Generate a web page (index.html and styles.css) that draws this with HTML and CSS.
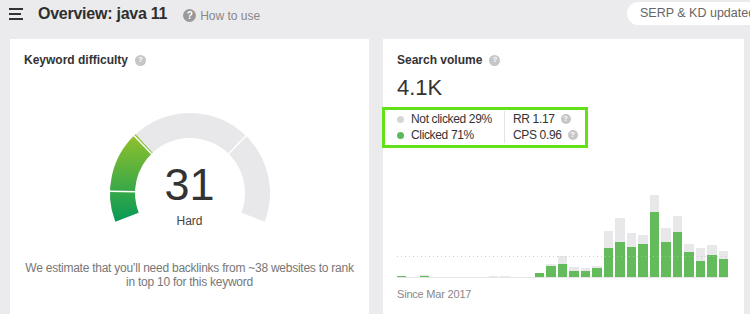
FILE: index.html
```html
<!DOCTYPE html>
<html lang="en">
<head>
<meta charset="utf-8">
<title>Overview: java 11</title>
<link rel="stylesheet" href="styles.css">
</head>
<body>
<header class="topbar">
  <div class="menu"><span></span><span class="short"></span><span></span></div>
  <h1 class="title">Overview: java 11</h1>
  <a class="howto"><span class="qmark dark">?</span>How to use</a>
  <div class="status"><span class="pill">SERP &amp; KD updated</span></div>
</header>
<main class="grid">
  <section class="card kd">
    <h2 class="card-title">Keyword difficulty <span class="qmark">?</span></h2>
    <div class="gauge">
      <svg class="gauge-svg" width="170" height="115" viewBox="0 0 170 115">
        <defs>
          <linearGradient id="kdg" x1="0" y1="25" x2="0" y2="113" gradientUnits="userSpaceOnUse">
            <stop offset="0" stop-color="#95c22b"/>
            <stop offset="1" stop-color="#079a57"/>
          </linearGradient>
        </defs>
        <path d="M21.98 109.19 A67.5 67.5 0 1 1 148.02 109.19" fill="none" stroke="#e8e8ea" stroke-width="25"/>
        <path d="M21.98 109.19 A67.5 67.5 0 0 1 39.09 35.52" fill="none" stroke="url(#kdg)" stroke-width="25"/>
        <line x1="31" y1="83.87" x2="4" y2="83.3" stroke="#fff" stroke-width="1.5"/>
        <line x1="47.2" y1="46.4" x2="28.3" y2="27.1" stroke="#fff" stroke-width="1.5"/>
        <line x1="122.8" y1="46.4" x2="141.7" y2="27.1" stroke="#fff" stroke-width="1.5"/>
      </svg>
      <div class="gauge-val">
        <div class="num">31</div>
        <div class="lbl">Hard</div>
      </div>
    </div>
    <p class="estimate">We estimate that you’ll need backlinks from ~38 websites to rank<br>in top 10 for this keyword</p>
  </section>
  <section class="card sv">
    <h2 class="card-title">Search volume <span class="qmark">?</span></h2>
    <div class="volume">4.1K</div>
    <div class="clicks">
      <div class="col left">
        <div class="row"><i class="dot gray"></i>Not clicked 29%</div>
        <div class="row"><i class="dot green"></i>Clicked 71%</div>
      </div>
      <div class="col right">
        <div class="row">RR 1.17<span class="qmark small">?</span></div>
        <div class="row">CPS 0.96<span class="qmark small">?</span></div>
      </div>
    </div>
    <div class="chart">
      <div class="avg"></div>
      <div class="bar" style="height:1.5px"><i style="height:1.3px"></i></div>
      <div class="bar" style="height:0"><i style="height:0"></i></div>
      <div class="bar" style="height:2px"><i style="height:1.3px"></i></div>
      <div class="bar" style="height:0"><i style="height:0"></i></div>
      <div class="bar" style="height:0"><i style="height:0"></i></div>
      <div class="bar" style="height:0"><i style="height:0"></i></div>
      <div class="bar" style="height:0"><i style="height:0"></i></div>
      <div class="bar" style="height:0"><i style="height:0"></i></div>
      <div class="bar" style="height:1px"><i style="height:0"></i></div>
      <div class="bar" style="height:1px"><i style="height:0"></i></div>
      <div class="bar" style="height:0"><i style="height:0"></i></div>
      <div class="bar" style="height:0"><i style="height:0"></i></div>
      <div class="bar" style="height:4.3px"><i style="height:3.7px"></i></div>
      <div class="bar" style="height:12.7px"><i style="height:11.3px"></i></div>
      <div class="bar" style="height:20.7px"><i style="height:13px"></i></div>
      <div class="bar" style="height:10.3px"><i style="height:6.3px"></i></div>
      <div class="bar" style="height:8.7px"><i style="height:6.3px"></i></div>
      <div class="bar" style="height:11.3px"><i style="height:9px"></i></div>
      <div class="bar" style="height:46px"><i style="height:29px"></i></div>
      <div class="bar" style="height:59.3px"><i style="height:35.3px"></i></div>
      <div class="bar" style="height:43.7px"><i style="height:30px"></i></div>
      <div class="bar" style="height:42.3px"><i style="height:32.7px"></i></div>
      <div class="bar" style="height:82px"><i style="height:64.7px"></i></div>
      <div class="bar" style="height:48.7px"><i style="height:35.3px"></i></div>
      <div class="bar" style="height:60.7px"><i style="height:45px"></i></div>
      <div class="bar" style="height:33px"><i style="height:25px"></i></div>
      <div class="bar" style="height:28.7px"><i style="height:16px"></i></div>
      <div class="bar" style="height:31.7px"><i style="height:22px"></i></div>
      <div class="bar" style="height:26.3px"><i style="height:18.3px"></i></div>
    </div>
    <div class="since">Since Mar 2017</div>
  </section>
</main>
</body>
</html>
```
FILE: styles.css
```css
html, body {
  margin: 0;
  padding: 0;
}
body {
  width: 750px;
  height: 314px;
  overflow: hidden;
  background: #ebebed;
  font-family: Arial, "Liberation Sans", sans-serif;
  color: #333;
}

/* top bar */
.topbar {
  display: flex;
  align-items: center;
  height: 28px;
  padding-left: 9px;
}
.menu {
  display: flex;
  flex-direction: column;
  gap: 3px;
  width: 14px;
}
.menu span {
  display: block;
  width: 14px;
  height: 2px;
  background: #333;
}
.menu .short {
  width: 11.5px;
}
.title {
  margin: 0 0 0 15px;
  font-size: 16px;
  font-weight: bold;
  line-height: 20px;
  letter-spacing: -0.25px;
  color: #2f2f2f;
}
.howto {
  display: flex;
  align-items: center;
  margin: 3px 0 0 16px;
  font-size: 12px;
  line-height: 14px;
  color: #888;
}
.status {
  margin-left: auto;
  width: 123px;
  overflow: hidden;
  display: flex;
  margin-top: -1px;
}
.pill {
  flex-shrink: 0;
  white-space: nowrap;
  height: 23px;
  line-height: 23px;
  padding: 0 30px 0 13px;
  border-radius: 12px;
  background: #fff;
  font-size: 12.5px;
  color: #666;
}

/* question marks */
.qmark {
  display: inline-flex;
  align-items: center;
  justify-content: center;
  width: 11px;
  height: 11px;
  border-radius: 50%;
  background: #c6c6c6;
  color: #fff;
  font-size: 8px;
  font-weight: bold;
  line-height: 1;
  letter-spacing: 0;
}
.qmark.dark {
  width: 13px;
  height: 13px;
  background: #999;
  font-size: 10px;
  margin-right: 4px;
}
.qmark.small {
  width: 10px;
  height: 10px;
  font-size: 7.5px;
  margin-left: 6px;
}

/* cards */
.grid {
  display: grid;
  grid-template-columns: 359px 361px;
  gap: 14px;
  padding-left: 10px;
  margin-top: 11px;
}
.card {
  background: #fff;
  height: 290px;
  box-sizing: border-box;
  padding: 14px 14px 0;
}
.card-title {
  margin: 0;
  display: flex;
  align-items: center;
  gap: 7px;
  font-size: 12px;
  font-weight: bold;
  line-height: 14px;
  color: #333;
}

/* gauge */
.gauge {
  display: grid;
  width: 170px;
  height: 120px;
  margin: 41px auto 0;
}
.gauge > * {
  grid-area: 1 / 1;
}
.gauge-svg {
  display: block;
}
.gauge-val {
  text-align: center;
  padding-top: 54px;
}
.num {
  font-size: 45px;
  line-height: 45px;
  color: #333;
}
.lbl {
  margin-top: 7px;
  font-size: 12px;
  line-height: 14px;
  color: #444;
}
.estimate {
  margin: 33px 0 0;
  text-align: center;
  white-space: nowrap;
  font-size: 12px;
  line-height: 14px;
  letter-spacing: -0.25px;
  color: #777;
}

/* search volume */
.volume {
  margin-top: 8px;
  font-size: 22px;
  line-height: 26px;
  color: #333;
}
.clicks {
  display: flex;
  width: fit-content;
  margin: 6px 0 0 -15px;
  border: 3px solid #62e01a;
  padding: 1px 0 2px 12px;
  font-size: 12px;
  line-height: 16px;
  letter-spacing: -0.35px;
  color: #333;
}
.col.left {
  width: 107px;
}
.col.right {
  width: 81px;
  box-sizing: border-box;
  padding-left: 8px;
  border-left: 1px solid #e3e3e3;
}
.row {
  display: flex;
  align-items: center;
  white-space: nowrap;
}
.dot {
  display: block;
  width: 7px;
  height: 7px;
  border-radius: 50%;
  margin-right: 7px;
}
.dot.gray {
  background: #d6d6d6;
}
.dot.green {
  background: #5cb85c;
}

/* chart */
.chart {
  position: relative;
  display: flex;
  align-items: flex-end;
  gap: 2px;
  width: 331px;
  height: 117px;
  margin-top: 12px;
  border-bottom: 1px solid #e6e6e6;
}
.bar {
  flex: 1;
  display: flex;
  flex-direction: column;
  justify-content: flex-end;
  background: #e8e8ea;
}
.bar i {
  display: block;
  background: #64bb5c;
}
.avg {
  position: absolute;
  left: 0;
  right: 0;
  bottom: 20px;
  height: 1px;
  background: repeating-linear-gradient(90deg, #bdbdbd 0 1px, transparent 1px 4px);
  opacity: 0.7;
  z-index: 1;
}
.since {
  margin-top: 9px;
  font-size: 11px;
  line-height: 14px;
  letter-spacing: -0.2px;
  color: #888;
}
```
